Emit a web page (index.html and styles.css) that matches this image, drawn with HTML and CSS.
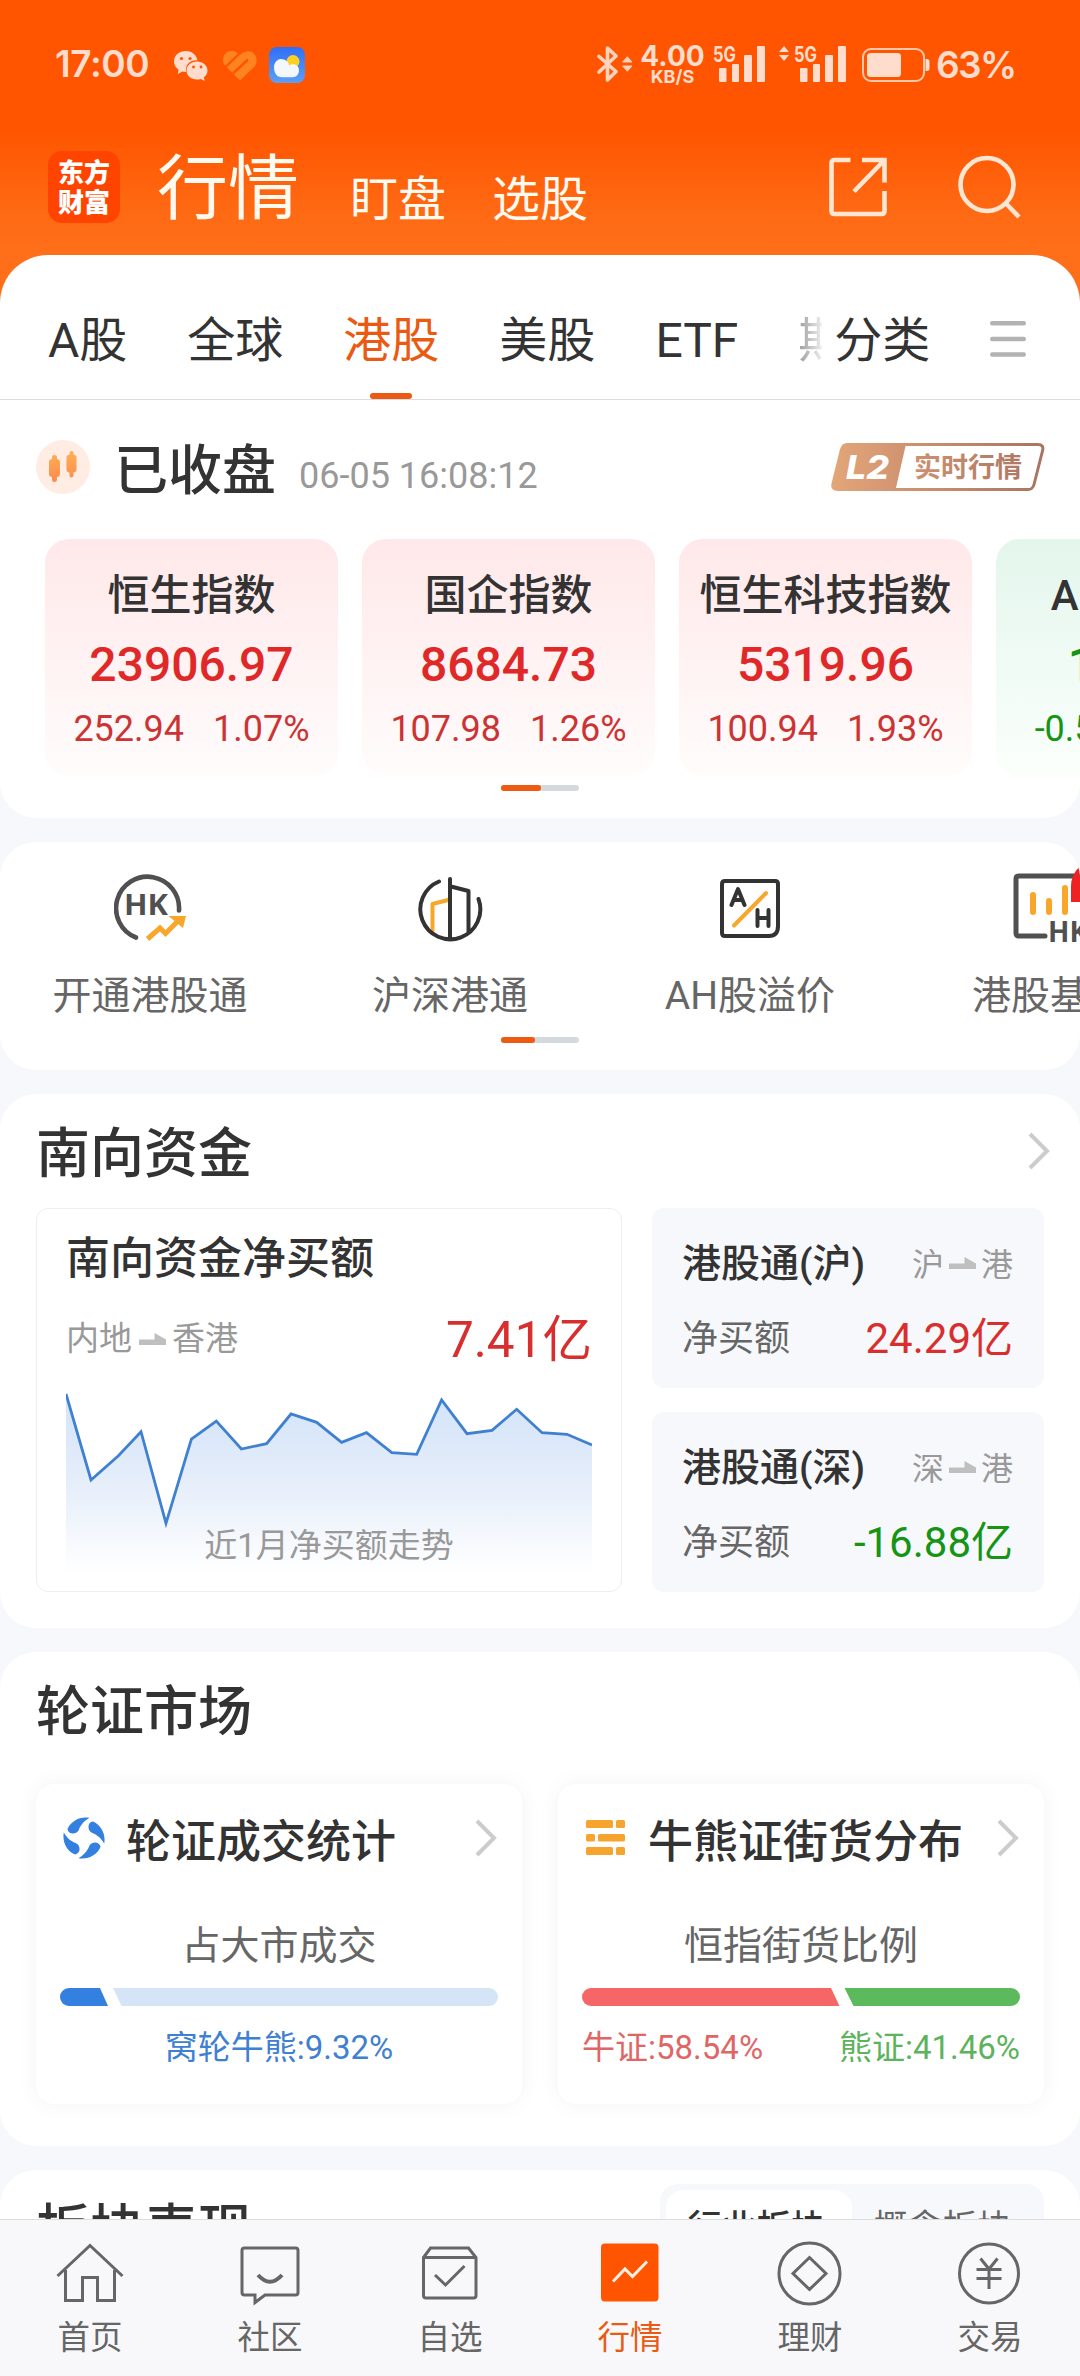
FILE: index.html
```html
<!DOCTYPE html>
<html lang="zh-CN">
<head>
<meta charset="utf-8">
<title>行情</title>
<link rel="stylesheet" href="styles.css">
</head>
<body>
<div class="app">
  <header class="header">
    <div class="status">
      <span class="clock">17:00</span>
      <svg class="st-wechat" width="34" height="30" viewBox="0 0 34 30" fill="#ffdccb">
        <path d="M12 0C5 0 0 4.600 0 10.500c0 3.500 1.800 6.300 4.600 8.200L3.800 23l4.600-2.500c1.200.3 2.400.5 3.600.5C11 13.500 16 9 23.500 9.300 22.500 4 18 0 12 0z"/>
        <path d="M23 10.500c-6 0-10.500 4-10.500 9s4.500 9 10.500 9c1.300 0 2.600-.2 3.700-.6l4 2.100-.9-3.700c2.400-1.700 3.700-4.100 3.700-6.800 0-5-4.500-9-10.500-9z"/>
        <g fill="#ff5500"><circle cx="7.500" cy="7.500" r="1.600"/><circle cx="16" cy="7.500" r="1.600"/><circle cx="19.500" cy="16" r="1.400"/><circle cx="27" cy="16" r="1.400"/></g>
      </svg>
      <svg class="st-heart" width="34" height="30" viewBox="0 0 34 30" fill="none">
        <path d="M9 0C3 0 0 4 0 9c0 2.500 1 4.500 2.500 6L17 29.500L31.500 15.500C35 11.500 34 5 30.500 2.200C27 -.6 22 -.4 18.500 2.800L17 4.200C14.500 1.500 12 0 9 0z" fill="#ff8420"/>
        <path d="M2.500 16L16 3M10 22.500L25 8.500" stroke="#ff5500" stroke-width="2.400"/>
      </svg>
      <svg class="st-weather" width="36" height="36" viewBox="0 0 36 36">
        <defs><linearGradient id="sky" x1="0" y1="0" x2="0" y2="1"><stop offset="0" stop-color="#2f6ff8"/><stop offset="1" stop-color="#5c9ff5"/></linearGradient></defs>
        <rect width="36" height="36" rx="8" fill="url(#sky)"/>
        <circle cx="24" cy="14.500" r="6.500" fill="#fdd023"/>
        <path d="M12 12a8.500 8.500 0 0 1 8.200 6.500c1-.8 2.300-1.200 3.800-1.200 3.500 0 6 2.600 6 6 0 4-2.500 7-6.500 7H13C8 30.300 5 26 5 20.500 5 15.800 8 12 12 12z" fill="#f3f8ff"/>
      </svg>
      <span class="spacer"></span>
      <svg class="st-bt" width="36" height="36" viewBox="0 0 36 36" fill="none" stroke="#ffd3bd" stroke-width="3.600" stroke-linejoin="round" stroke-linecap="round">
        <path d="M2 10.500L19 25.500L10.500 34V2L19 10L2 26"/>
        <path d="M26 16h9l-4.500-5zM26 20h9l-4.500 5z" fill="#ffd3bd" stroke-width="1"/>
      </svg>
      <span class="speed"><b>4.00</b><i>KB/S</i></span>
      <svg class="st-sig" width="53" height="38" viewBox="0 0 53 38" fill="#ffdccb">
        <text x="0" y="16" textLength="23" lengthAdjust="spacingAndGlyphs" class="g5">5G</text>
        <rect x="6" y="22" width="7.500" height="14" rx="1"/><rect x="19" y="18" width="7" height="18" rx="1"/><rect x="31" y="9" width="8" height="27" rx="1"/><rect x="44" y="0" width="8" height="36" rx="1"/>
      </svg>
      <svg class="st-sig2" width="68" height="38" viewBox="0 0 68 38" fill="#ffdccb">
        <path d="M0 6h10L5 0zM0 9h10l-5 6z"/>
        <text x="15" y="16" textLength="23" lengthAdjust="spacingAndGlyphs" class="g5">5G</text>
        <rect x="21" y="22" width="7.500" height="14" rx="1"/><rect x="34" y="18" width="7" height="18" rx="1"/><rect x="46" y="9" width="8" height="27" rx="1"/><rect x="59" y="0" width="8" height="36" rx="1"/>
      </svg>
      <svg class="st-bat" width="68" height="34" viewBox="0 0 68 34">
        <rect x="1" y="1" width="61" height="32" rx="8" fill="none" stroke="#ffc7aa" stroke-width="2"/>
        <rect x="5" y="5" width="34" height="24" rx="3.500" fill="#ffdccb"/>
        <path d="M63.500 11h1.500q2.500 0 2.500 3v6q0 3-2.500 3h-1.500z" fill="#ffdccb"/>
      </svg>
      <span class="pct">63%</span>
    </div>
    <div class="topnav">
      <div class="logo"><span>东方</span><span>财富</span></div>
      <span class="nav-main">行情</span>
      <span class="nav-sub">盯盘</span>
      <span class="nav-sub">选股</span>
      <span class="spacer"></span>
      <svg class="ic-share" width="58" height="60" viewBox="0 0 58 60" fill="none" stroke="#ffe6d3" stroke-width="4.600">
        <path d="M21.500 3H5.500Q2.500 3 2.500 6v48q0 3 3 3h47q3 0 3-3V34"/><path d="M33 3h22.500v22.500M55 3.500L25 34.500"/>
      </svg>
      <svg class="ic-search" width="64" height="66" viewBox="0 0 64 66" fill="none" stroke="#ffe6d3" stroke-width="4.600">
        <circle cx="29" cy="30.500" r="26.500"/><path d="M48 49.500L61 63"/>
      </svg>
    </div>
  </header>

  <main class="content">
    <section class="panel indices">
      <nav class="tabs">
        <span>A股</span><span>全球</span><span class="on">港股</span><span>美股</span><span>ETF</span><span class="cut">期</span>
        <span class="cat">分类</span>
        <svg class="burger" width="36" height="38" viewBox="0 0 36 38" stroke="#b2b2b2" stroke-width="4.400" stroke-linecap="round"><path d="M2.200 3.200h31.600M2.200 19h31.600M2.200 34.500h31.600"/></svg>
      </nav>
      <div class="market-state">
        <svg width="54" height="54" viewBox="0 0 54 54">
          <defs><linearGradient id="cd" x1="0" y1="0" x2="0" y2="1"><stop offset="0" stop-color="#fdb055"/><stop offset="1" stop-color="#fd8a4e"/></linearGradient></defs>
          <circle cx="27" cy="27" r="27" fill="#ffece3"/>
          <path d="M16 17q0-2 2.500-2t2.500 2v2q3 .5 3 3v12q0 2.600-3 3v3q0 2-2.500 2T16 40v-3q-3-.4-3-3V22q0-2.500 3-3zM33.500 13q0-2 2-2t2 2v1.500q3 .5 3 3v12q0 2.500-3 3v3q0 2-2 2t-2-2v-3q-3-.5-3-3v-12q0-2.500 3-3z" fill="url(#cd)"/>
        </svg>
        <strong>已收盘</strong>
        <time>06-05 16:08:12</time>
        <span class="spacer"></span>
        <svg class="l2" width="214" height="48" viewBox="0 0 214 48">
          <defs><linearGradient id="br" gradientUnits="userSpaceOnUse" x1="0" y1="0" x2="214" y2="0"><stop offset="0" stop-color="#e3a678"/><stop offset=".35" stop-color="#d09371"/><stop offset="1" stop-color="#a87362"/></linearGradient></defs>
          <path d="M16 1.500h191q6 0 4.600 6l-8.600 34q-1.300 5-6 5H7q-6.500 0-5-6L10.500 6.500Q12 1.500 16 1.500z" fill="#fff" stroke="url(#br)" stroke-width="3"/>
          <path d="M16 1h59L64.500 47H7q-6.500 0-5-6l8.500-35Q12 1 16 1z" fill="url(#br)"/>
          <text x="15" y="36" textLength="43" lengthAdjust="spacingAndGlyphs" class="l2t">L2</text>
          <text x="83" y="34" class="l2c" fill="url(#br)">实时行情</text>
        </svg>
      </div>
      <div class="cards">
        <article class="idx"><h3>恒生指数</h3><b>23906.97</b><p><span>252.94</span><span>1.07%</span></p></article>
        <article class="idx"><h3>国企指数</h3><b>8684.73</b><p><span>107.98</span><span>1.26%</span></p></article>
        <article class="idx"><h3>恒生科技指数</h3><b>5319.96</b><p><span>100.94</span><span>1.93%</span></p></article>
        <article class="idx down"><h3>AH股溢价</h3><b>118.95</b><p><span>-0.58</span><span>-0.49%</span></p></article>
      </div>
      <div class="pager"><i class="p40"></i></div>
    </section>

    <section class="panel shortcuts">
      <div class="row">
        <a class="sc"><svg width="72" height="72" viewBox="0 0 72 72" fill="none">
          <path d="M65 40.500A31.500 31.500 0 1 0 22 67.500" stroke="#505050" stroke-width="4.600" stroke-linecap="round"/>
          <text x="10" y="44.500" textLength="44" lengthAdjust="spacingAndGlyphs" class="hk" font-size="28" fill="#505050">HK</text>
          <path d="M33.500 69L46 58l5.500 5.500L64 51" stroke="#f9a72b" stroke-width="5"/><path d="M54.500 46H72l-3 12z" fill="#f9a72b"/>
        </svg><span>开通港股通</span></a>
        <a class="sc"><svg width="72" height="72" viewBox="0 0 72 72" fill="none" stroke="#333" stroke-width="4" stroke-linecap="round" stroke-linejoin="round">
          <path d="M34 30L18.500 34v27" stroke="#f9a72b"/>
          <path d="M25 11.500A30 30 0 1 0 64.500 29M36 9v59M37 16.500l17.500 4.500v41"/>
        </svg><span>沪深港通</span></a>
        <a class="sc"><svg width="72" height="72" viewBox="0 0 72 72" fill="none" stroke="#333" stroke-width="4">
          <path d="M11 11h50q3 0 3 3v42q0 10-9 10H11q-3 0-3-3V14q0-3 3-3z"/>
          <path d="M52 23L20 55.500" stroke="#f9a72b" stroke-linecap="round"/>
          <path d="M17.500 35L24 19l6.500 16M19.500 30h9M43.500 40v16M54.500 40v16M43.500 48h11" stroke-linecap="round" stroke-linejoin="round"/>
        </svg><span>AH股溢价</span></a>
        <a class="sc"><svg width="72" height="72" viewBox="0 0 72 72" fill="none" class="wide">
          <path d="M90 6H5Q2 6 2 9v54q0 3 3 3h26" stroke="#505050" stroke-width="5" stroke-linecap="round"/>
          <path d="M19 25v17M35 31v11M51 18v24" stroke="#f9a72b" stroke-width="6" stroke-linecap="round"/>
          <text x="34" y="72" class="hk" font-size="28" fill="#505050">HK</text>
        </svg><span>港股基金</span><em class="hot"></em></a>
      </div>
      <div class="pager"><i class="p34"></i></div>
    </section>

    <section class="panel south">
      <h2><span>南向资金</span><svg width="24" height="38" viewBox="0 0 24 38" class="chev"><path d="M3 2l17 17L3 36"/></svg></h2>
      <div class="south-grid">
        <div class="net">
          <h3>南向资金净买额</h3>
          <div class="flow"><span class="dir">内地<svg width="27" height="12" viewBox="0 0 27 12"><path d="M0 6.500h15.500V0L27 6.500V12H0z"/></svg>香港</span><b class="up">7.41亿</b></div>
          <div class="chart">
            <svg width="526" height="184" viewBox="0 0 526 184">
              <defs><linearGradient id="area" x1="0" y1="0" x2="0" y2="1"><stop offset="0" stop-color="#d2e3f9"/><stop offset=".5" stop-color="#e6eefa"/><stop offset="1" stop-color="#fff"/></linearGradient></defs>
              <path fill="url(#area)" d="M0 4L25 90L52.400 65.700L75 41.700L100 133.300L125.400 49L150.300 31L175.400 59L200.600 53.700L225 24L250.700 32.300L275.600 52.300L300.500 42.700L325.800 62.700L350.700 64.300L375.600 10L401 43.700L426 40.300L450.700 19.300L476 42.700L501 44.300L526 55V184H0z"/>
              <path fill="none" stroke="#3f80d1" stroke-width="2.800" d="M0 4L25 90L52.400 65.700L75 41.700L100 133.300L125.400 49L150.300 31L175.400 59L200.600 53.700L225 24L250.700 32.300L275.600 52.300L300.500 42.700L325.800 62.700L350.700 64.300L375.600 10L401 43.700L426 40.300L450.700 19.300L476 42.700L501 44.300L526 55"/>
            </svg>
            <span class="caption">近1月净买额走势</span>
          </div>
        </div>
        <div class="side">
          <div class="link"><div><h4>港股通(沪)</h4><span class="dir">沪<svg width="27" height="12" viewBox="0 0 27 12"><path d="M0 6.500h15.500V0L27 6.500V12H0z"/></svg>港</span></div><div><span class="lbl">净买额</span><b class="up">24.29亿</b></div></div>
          <div class="link"><div><h4>港股通(深)</h4><span class="dir">深<svg width="27" height="12" viewBox="0 0 27 12"><path d="M0 6.500h15.500V0L27 6.500V12H0z"/></svg>港</span></div><div><span class="lbl">净买额</span><b class="dn">-16.88亿</b></div></div>
        </div>
      </div>
    </section>

    <section class="panel warrants">
      <h2><span>轮证市场</span></h2>
      <div class="wgrid">
        <div class="wcard">
          <h3><svg width="42" height="42" viewBox="0 0 42 42" fill="#3380e1">
            <path id="blade" d="M4.500 12C8 4 17 -1 26.500 .8C20 4.500 17 9.500 15.500 13.500C13 18 5 17.500 4.500 12z"/>
            <use href="#blade" transform="rotate(90 21 21)"/><use href="#blade" transform="rotate(180 21 21)"/><use href="#blade" transform="rotate(270 21 21)"/>
          </svg><span>轮证成交统计</span><svg width="24" height="38" viewBox="0 0 24 38" class="chev"><path d="M3 2l17 17L3 36"/></svg></h3>
          <p class="sub">占大市成交</p>
          <svg width="438" height="18" viewBox="0 0 438 18"><path d="M9 0h31l8 18H9A9 9 0 0 1 9 0z" fill="#3380e1"/><path d="M53 0h376a9 9 0 0 1 0 18H61.500z" fill="#d5e5f7"/></svg>
          <div class="legend mid"><span class="blue">窝轮牛熊:9.32%</span></div>
        </div>
        <div class="wcard">
          <h3><svg width="42" height="42" viewBox="0 0 42 42" fill="#f7a42e">
            <rect x="1" y="3" width="27" height="8" rx="1.500"/><rect x="31" y="3" width="9" height="8" rx="1.500"/><rect x="1" y="17" width="9" height="7.500" rx="1.500"/><rect x="13" y="17" width="27" height="7.500" rx="1.500"/><rect x="1" y="30" width="27" height="8" rx="1.500"/><rect x="31" y="30" width="9" height="8" rx="1.500"/>
          </svg><span>牛熊证街货分布</span><svg width="24" height="38" viewBox="0 0 24 38" class="chev"><path d="M3 2l17 17L3 36"/></svg></h3>
          <p class="sub">恒指街货比例</p>
          <svg width="438" height="18" viewBox="0 0 438 18"><path d="M9 0h240l8.500 18H9A9 9 0 0 1 9 0z" fill="#f66666"/><path d="M262.500 0H429a9 9 0 0 1 0 18H271.500z" fill="#5cb95c"/></svg>
          <div class="legend"><span class="red">牛证:58.54%</span><span class="green">熊证:41.46%</span></div>
        </div>
      </div>
    </section>

    <section class="panel sectors">
      <h2><span>板块表现</span></h2>
      <div class="seg"><span class="on">行业板块</span><span>概念板块</span></div>
    </section>
  </main>

  <footer class="tabbar">
    <a><svg width="72" height="72" viewBox="0 0 72 72"><path d="M3.500 39L36 8.500L68.500 39M11.500 33v30.500h17v-23h15v23h17V33"/></svg><span>首页</span></a>
    <a><svg width="72" height="72" viewBox="0 0 72 72"><path d="M10.500 11h51q2.500 0 2.500 2.500v42q0 2.500-2.500 2.500H31l-10 7.500V58H10.500Q8 58 8 55.500v-42Q8 11 10.500 11z"/><path d="M24 38q12 13.500 24 0" stroke-width="4"/></svg><span>社区</span></a>
    <a><svg width="72" height="72" viewBox="0 0 72 72"><path d="M9.500 20.500L16.500 11h38l7.500 9.500v38q0 2.500-2.500 2.500H12q-2.500 0-2.500-2.500zM9.500 20.500H62M21 38l10.500 10L50.500 29"/></svg><span>自选</span></a>
    <a class="on"><svg width="72" height="72" viewBox="0 0 72 72"><rect x="7" y="6.500" width="57.500" height="58" rx="4" fill="#ff5500" stroke="none"/><path d="M19 44.500L31 32l7.500 7.500L53 24.500" stroke="#fff0e0"/></svg><span>行情</span></a>
    <a><svg width="72" height="72" viewBox="0 0 72 72"><circle cx="35.500" cy="36.500" r="30.500"/><path d="M35.500 20.500L52 36.500L35.500 52.500L19 36.500z"/></svg><span>理财</span></a>
    <a><svg width="72" height="72" viewBox="0 0 72 72"><circle cx="35" cy="36.500" r="29.500"/><path d="M26.500 21.500L35 32l8.500-10.500M22.500 32.500h25M22.500 41.500h25M35 32v20"/></svg><span>交易</span></a>
  </footer>
</div>
</body>
</html>
```
FILE: styles.css
```css
* { box-sizing: border-box; margin: 0; padding: 0; }
body { background: #f7f8fb; font-family: Roboto, "Noto Sans CJK SC", sans-serif; color: #333; }
svg { display: block; flex: none; }
i, em { font-style: normal; }
.spacer { flex: 1; }
.app { width: 1080px; height: 2376px; overflow: hidden; display: flex; flex-direction: column; white-space: nowrap; }

/* header */
.header { flex: none; height: 320px; margin-bottom: -65px; background: linear-gradient(#ff5500 0, #ff5500 130px, #ff6a14 215px, #ff6f1a 256px); }
.status { display: flex; align-items: flex-start; height: 130px; padding: 46px 68px 0 55px; color: #ffdccb; font-family: Inter, sans-serif; }
.clock { width: 119px; font-size: 37px; font-weight: 600; line-height: 36px; letter-spacing: -.4px; }
.st-wechat { margin-top: 5px; }
.st-heart { margin: 5px 12px 0 15px; }
.st-weather { margin-top: 1px; }
.st-bt { margin-right: 10px; }
.speed { display: flex; flex-direction: column; align-items: center; width: 59px; margin-right: 11px; }
.speed b { font-size: 28px; line-height: 21px; font-weight: 700; }
.speed i { font-size: 18px; line-height: 20px; font-weight: 700; }
.st-sig, .st-sig2 { overflow: visible; }
.st-sig { margin-right: 13px; }
.g5 { font: 700 21px Inter, sans-serif; }
.st-sig2 { margin-right: 15px; }
.st-bat { margin: 2px 6px 0 0; }
.pct { width: 76px; font-size: 37px; font-weight: 600; line-height: 38px; letter-spacing: -1.6px; }
.topnav { display: flex; align-items: flex-start; height: 125px; padding: 0 58px 0 48px; color: #fffaf0; }
.logo { width: 72px; height: 72px; margin: 21px 37px 0 0; padding-top: 5px; border-radius: 14px; background: #ff4400; color: #fff; text-align: center; }
.logo span { display: block; font: 900 26px/30px "Noto Sans CJK SC", sans-serif; }
.nav-main { font-size: 71px; line-height: 80px; margin: 19px 51px 0 0; width: 142px; }
.nav-sub { font-size: 48px; line-height: 60px; margin: 40px 44px 0 0; width: 98px; }
.ic-share { margin: 27px 71px 0 0; }
.ic-search { margin-top: 24px; }

/* panels */
.content { flex: 1; min-height: 0; display: flex; flex-direction: column; gap: 24px; overflow: hidden; }
.panel { flex: none; background: #fff; border-radius: 36px; overflow: hidden; }
.panel h2 { display: flex; justify-content: space-between; align-items: center; height: 60px; font-size: 54px; font-weight: 500; line-height: 60px; }
.panel h2 span { padding-top: 4px; }
.chev path { fill: none; stroke: #ccc; stroke-width: 4; }
.pager { width: 78px; height: 6px; margin: 0 auto; border-radius: 3px; background: #d5d8dd; }
.pager i { display: block; height: 6px; border-radius: 3px; background: #ee5a10; }
.p40 { width: 40px; }
.p34 { width: 34px; }

.indices { height: 563px; border-radius: 48px 48px 36px 36px; }
.tabs { display: flex; gap: 60px; height: 145px; padding: 56px 0 0 48px; border-bottom: 1px solid #ddd; font-size: 48px; line-height: 60px; }
.tabs .on { color: #ea5a12; position: relative; }
.tabs .on::after { content: ""; position: absolute; left: 27px; top: 82px; width: 42px; height: 6px; border-radius: 3px; background: #ea5a12; }
.tabs .cut { width: 24px; overflow: hidden; margin-right: -48px; color: transparent; background: linear-gradient(90deg, #999, #eee); -webkit-background-clip: text; background-clip: text; }
.burger { margin-top: 9px; }
.market-state { display: flex; height: 139px; padding: 40px 35px 0 36px; }
.market-state strong { font-size: 54px; font-weight: 500; line-height: 60px; margin: 2px 23px 0 24px; }
.market-state time { font-size: 36px; line-height: 40px; margin-top: 16px; color: #999; }
.l2 { margin-top: 3px; }
.l2t { font: italic 800 33px Inter, sans-serif; fill: #fff; }
.l2c { font: 700 27px "Noto Sans CJK SC", sans-serif; }
.cards { display: flex; gap: 24px; height: 237px; padding-left: 45px; margin-bottom: 9px; }
.idx { flex: none; width: 293px; border-radius: 24px; background: linear-gradient(#ffe8e9, #fffcfc); text-align: center; color: #cc3333; }
.idx h3 { font-size: 42px; font-weight: 500; line-height: 50px; margin-top: 32px; color: #333; }
.idx b { display: block; font-size: 48px; font-weight: 500; line-height: 50px; margin-top: 19px; color: #e12828; }
.idx p { display: flex; justify-content: center; gap: 29px; font-size: 36px; line-height: 40px; margin-top: 19px; }
.idx.down { background: linear-gradient(#e3f6ec, #fbfffc); }
.idx.down b, .idx.down p { color: #159415; }

.shortcuts { height: 228px; }
.row { display: flex; height: 195px; }
.sc { position: relative; flex: none; width: 300px; padding-top: 28px; display: flex; flex-direction: column; align-items: center; color: #666; font-size: 39px; }
.sc span { line-height: 50px; margin-top: 29px; }
.wide { overflow: visible; }
.hk { font-family: "Open Sans", sans-serif; font-weight: 700; }
.hot { position: absolute; left: 171px; top: 18px; width: 60px; height: 42px; border-radius: 26px 0 0 0; background: #ee2222; }

.south { height: 534px; padding: 29px 36px 0; }
.south h2 { margin-right: -7px; }
.south h2 svg { margin-top: -4px; }
.south-grid { display: flex; gap: 30px; margin-top: 25px; }
.net { width: 586px; height: 384px; border: 1px solid #eee; border-radius: 12px; padding: 25px 29px 0; }
.net h3 { font-size: 44px; font-weight: 500; line-height: 50px; }
.flow { display: flex; justify-content: space-between; align-items: center; height: 60px; margin-top: 25px; }
.flow b { font-size: 49.500px; font-weight: 400; line-height: 60px; padding-top: 2px; }
.dir { display: flex; align-items: center; font-size: 33px; line-height: 40px; color: #999; }
.dir svg { margin: 0 6px 0 7px; fill: #bfbfbf; }
.up { color: #d82e2e; font-weight: 400; }
.dn { color: #159415; font-weight: 400; }
.chart { position: relative; width: 526px; margin-top: 21px; }
.caption { position: absolute; left: 0; right: 0; top: 136px; text-align: center; font-size: 33px; line-height: 40px; color: #999; }
.side { display: flex; flex-direction: column; gap: 24px; flex: 1; }
.link { height: 180px; border-radius: 12px; background: #f7f8fb; padding: 27px 31px 0 30px; }
.link > div { display: flex; justify-content: space-between; align-items: center; height: 50px; }
.link > div + div { margin-top: 25px; }
.link h4 { font-size: 39px; font-weight: 500; }
.link .dir { margin-top: 10px; font-size: 32px; }
.link .dir svg { margin: 0 5px 4px; }
.link b { font-size: 42px; margin-top: -2px; }
.lbl { font-size: 36px; color: #666; }

.warrants { height: 494px; padding: 29px 36px 0; }
.wgrid { display: flex; gap: 36px; margin-top: 43px; }
.wcard { width: 486px; height: 320px; border-radius: 18px; padding: 24px 24px 0; background: #fff; box-shadow: 0 0 22px rgba(0, 0, 0, .05); }
.wcard h3 { display: flex; align-items: center; height: 60px; padding-left: 3px; font-size: 45px; font-weight: 500; }
.wcard h3 span { flex: 1; margin-left: 21px; }
.sub { margin: 52px 0 15px; text-align: center; font-size: 39px; line-height: 53px; color: #666; }
.legend { display: flex; justify-content: space-between; margin-top: 22px; font-size: 33px; line-height: 40px; }
.legend.mid { justify-content: center; }
.blue { color: #3f80d1; }
.red { color: #e06666; }
.green { color: #5cb35c; }

.sectors { display: flex; justify-content: space-between; height: 220px; padding: 14px 36px 0; }
.sectors h2 { margin-top: 15px; }
.seg { display: flex; width: 384px; height: 90px; padding: 6px; border-radius: 18px; background: #f7f8fb; font-size: 34.500px; line-height: 74px; color: #666; text-align: center; }
.seg span { flex: 1; padding-right: 5px; }
.seg .on { border-radius: 18px; background: #fff; color: #333; font-weight: 500; }

/* bottom bar */
.tabbar { flex: none; display: flex; height: 157px; border-top: 1px solid #ddd; background: #f8f8fb; }
.tabbar a { width: 180px; padding-top: 17px; display: flex; flex-direction: column; align-items: center; font-size: 32.500px; line-height: 40px; color: #666; }
.tabbar svg { fill: none; stroke: #666; stroke-width: 3; }
.tabbar span { margin-top: 9px; }
.tabbar .on { color: #ea5a12; }
```
